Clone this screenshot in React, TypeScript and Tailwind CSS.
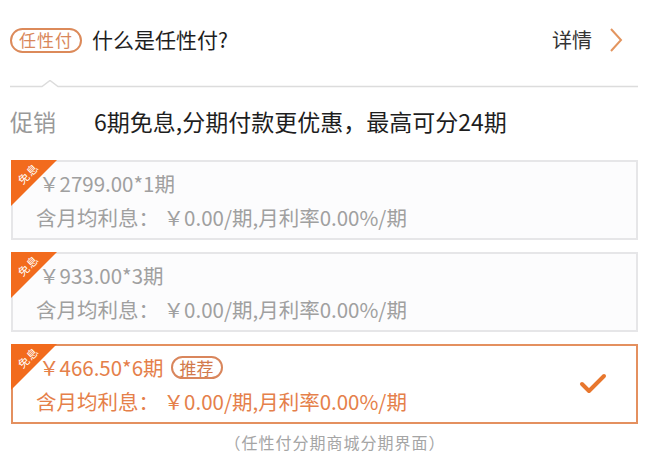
import React from "react";

type Plan = {
  price: string;
  selected?: boolean;
};

const plans: Plan[] = [
  { price: "￥2799.00*1期" },
  { price: "￥933.00*3期" },
  { price: "￥466.50*6期", selected: true },
];

function Card({ plan }: { plan: Plan }) {
  const sel = !!plan.selected;
  return (
    <div
      className={
        sel
          ? "relative h-[80px] border-2 border-[#e4905f] bg-white flex items-center"
          : "relative h-[80px] border-2 border-[#e6e6e8] bg-[#fcfcfd] flex items-center"
      }
    >
      <div className="absolute -left-[2px] -top-[2px] w-0 h-0 border-t-[46px] border-r-[46px] border-t-[#f26b1d] border-r-transparent" />
      <div className="absolute left-[3px] top-[5px] -rotate-45 text-white text-[11px] leading-[13px] tracking-[1px]">
        免息
      </div>
      <div className="flex-1 pl-[23px] flex flex-col gap-[5px]">
        <div
          className={
            sel
              ? "ml-[3px] flex items-center h-[28px] text-[20.5px] text-[#e5804a]"
              : "ml-[3px] flex items-center h-[28px] text-[20.5px] text-[#a0a0a0]"
          }
        >
          <span>{plan.price}</span>
          {sel && (
            <span className="ml-[7px] h-[23px] px-[7px] rounded-full border-2 border-[#d9865c] text-[17px] text-[#d27a4c] flex items-center">
              推荐
            </span>
          )}
        </div>
        <div
          className={
            sel
              ? "h-[28px] leading-[28px] text-[20.5px] text-[#e5804a]"
              : "h-[28px] leading-[28px] text-[20.5px] text-[#a0a0a0]"
          }
        >
          含月均利息： ￥0.00/期,月利率0.00%/期
        </div>
      </div>
      {sel && (
        <svg width="28" height="24" viewBox="0 0 28 24" className="mr-[29px]">
          <polyline
            points="3,12 10,19 25,4"
            fill="none"
            stroke="#e8772e"
            strokeWidth="4"
            strokeLinecap="round"
            strokeLinejoin="round"
          />
        </svg>
      )}
    </div>
  );
}

export default function App() {
  return (
    <div
      className="w-[652px] h-[466px] bg-white overflow-hidden"
      style={{ fontFamily: '"Noto Sans CJK SC", "Noto Sans", sans-serif' }}
    >
      <div className="h-[80px] pl-[10px] pr-[29px] flex items-center justify-between">
        <div className="flex items-center">
          <span className="h-[25px] w-[72px] rounded-full border-2 border-[#dc8a5a] text-[#d9885b] text-[17px] flex items-center justify-center tracking-[1px]">
            任性付
          </span>
          <span className="ml-[10px] text-[21px] text-[#1e1e1e]">什么是任性付?</span>
        </div>
        <div className="flex items-center">
          <span className="text-[20px] text-[#333]">详情</span>
          <svg width="14" height="26" viewBox="0 0 14 26" className="ml-[17px]">
            <polyline
              points="2,2 12,13 2,24"
              fill="none"
              stroke="#e3955f"
              strokeWidth="2"
              strokeLinejoin="miter"
            />
          </svg>
        </div>
      </div>
      <div className="pl-[10px] pr-[14px]">
        <svg width="628" height="8" viewBox="0 0 628 8" className="block">
          <polyline
            points="0,6.5 32,6.5 40,0.5 48,6.5 628,6.5"
            fill="none"
            stroke="#dcdcdc"
            strokeWidth="1.5"
          />
        </svg>
      </div>
      <div className="h-[72px] pb-[6px] pl-[10px] flex items-center">
        <span className="w-[84px] text-[23px] text-[#999]">促销</span>
        <span className="text-[23px] text-[#1e1e1e]">6期免息,分期付款更优惠，最高可分24期</span>
      </div>
      <div className="ml-[11px] w-[627px] flex flex-col gap-[12px]">
        {plans.map((p, i) => (
          <Card key={i} plan={p} />
        ))}
      </div>
      <div className="mt-[6px] flex justify-center pl-[18px] text-[16px] tracking-[1px] text-[#a5a5a5]">
        （任性付分期商城分期界面）
      </div>
    </div>
  );
}
